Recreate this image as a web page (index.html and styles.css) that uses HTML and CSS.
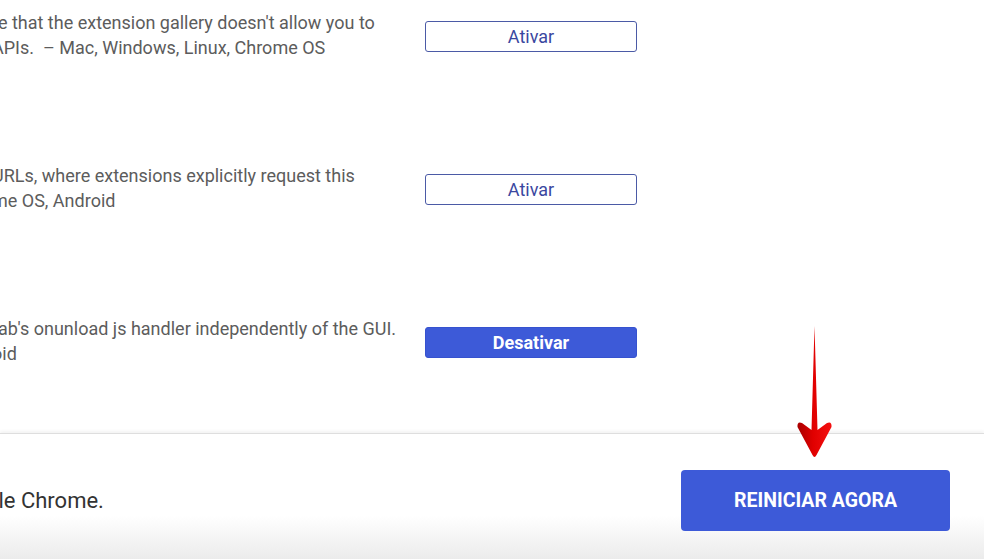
FILE: index.html
```html
<!DOCTYPE html>
<html lang="pt-BR">
<head>
    <meta charset="UTF-8">
    <meta name="viewport" content="width=device-width, initial-scale=1.0">
    <title>Experimentos</title>
    <link rel="stylesheet" href="styles.css">
</head>
<body>

    <div class="flags">
        <div class="flag">
            <div class="flag-desc">
                <div>te that the extension gallery doesn't allow you to</div>
                <div>APIs.&nbsp; – Mac, Windows, Linux, Chrome OS</div>
            </div>
            <button class="btn-outline">Ativar</button>
        </div>

        <div class="flag">
            <div class="flag-desc">
                <div>URLs, where extensions explicitly request this</div>
                <div>me OS, Android</div>
            </div>
            <button class="btn-outline">Ativar</button>
        </div>

        <div class="flag">
            <div class="flag-desc">
                <div>tab's onunload js handler independently of the GUI.</div>
                <div>oid</div>
            </div>
            <button class="btn-solid">Desativar</button>
        </div>
    </div>

    <div class="footer">
        <div class="footer-text">Google Chrome.</div>
        <button class="btn-restart">REINICIAR AGORA</button>
    </div>

    <!-- red annotation arrow over the page -->
    <svg class="arrow" width="40" height="136" viewBox="0 0 40 136">
        <defs>
            <linearGradient id="red" x1="0" y1="0" x2="1" y2="0">
                <stop offset="0" stop-color="#a80000"/>
                <stop offset="0.45" stop-color="#e00000"/>
                <stop offset="1" stop-color="#f51010"/>
            </linearGradient>
        </defs>
        <path d="M19.5 2 L22.5 106 L32 99 Q37 97 36.5 103 L21.5 131 Q19.5 135 17.5 131 L2.5 103 Q2 97 7 99 L16.5 106 Z" fill="url(#red)"/>
    </svg>

</body>
</html>
```

FILE: styles.css
```css
body {
    margin: 0;
    width: 984px;
    height: 559px;
    overflow: hidden;
    background: #fff;
    font-family: Roboto, "Liberation Sans", Arial, sans-serif;
    position: relative;
}

.flags {
    height: 433px;
    overflow: hidden;
    padding-top: 10px;
    box-sizing: border-box;
}

.flag {
    display: flex;
    align-items: flex-start;
    height: 153px;
}

.flag-desc {
    flex: 0 0 433px;
    margin-left: -8px;
    font-size: 18px;
    line-height: 25px;
    color: #5c5c5c;
    white-space: nowrap;
}

.btn-outline,
.btn-solid {
    width: 212px;
    height: 31px;
    margin-top: 11px;
    border-radius: 3px;
    font-family: inherit;
    font-size: 18px;
    cursor: pointer;
}

.btn-outline {
    background: #fff;
    border: 1px solid #4b5aa6;
    color: #3a47a0;
}

.btn-solid {
    background: #3d5ad8;
    border: 1px solid #3652cf;
    color: #fff;
    font-weight: bold;
}

.footer {
    height: 126px;
    box-sizing: border-box;
    border-top: 1px solid #dedede;
    box-shadow: 0 -2px 3px rgba(0, 0, 0, 0.05);
    background: linear-gradient(to bottom, #fff 0, #fff 82px, #f2f2f2 110px, #ebebeb 126px);
    display: flex;
    align-items: center;
    justify-content: space-between;
    padding: 8px 34px 0 0;
}

.footer-text {
    margin-left: -54px;
    font-size: 22px;
    color: #333;
}

.btn-restart {
    width: 269px;
    height: 61px;
    background: #3d5ad8;
    border: none;
    border-radius: 4px;
    color: #fff;
    font-family: inherit;
    font-size: 19.5px;
    font-weight: bold;
    cursor: pointer;
}

.arrow {
    position: absolute;
    left: 795px;
    top: 324px;
}
```
